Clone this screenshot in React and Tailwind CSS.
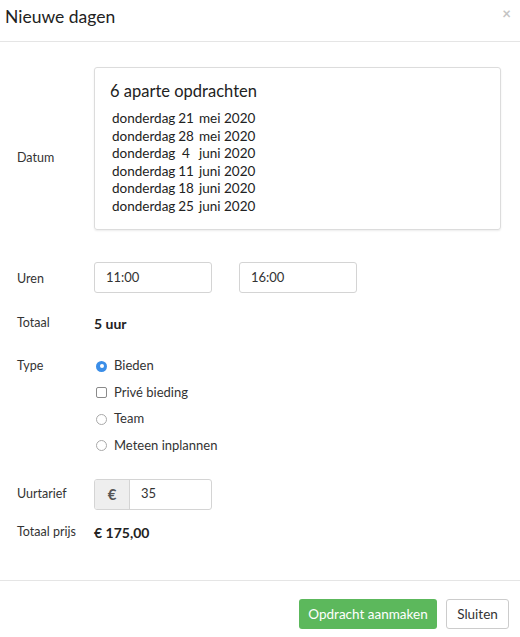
const dates = [
  ["donderdag", "21", "mei", "2020"],
  ["donderdag", "28", "mei", "2020"],
  ["donderdag", "4", "juni", "2020"],
  ["donderdag", "11", "juni", "2020"],
  ["donderdag", "18", "juni", "2020"],
  ["donderdag", "25", "juni", "2020"],
]

function Radio({ checked }) {
  if (checked) {
    return (
      <span className="w-[11px] h-[11px] rounded-full bg-[#3b8ee8] flex items-center justify-center">
        <span className="w-[4px] h-[4px] rounded-full bg-white" />
      </span>
    )
  }
  return <span className="w-[11px] h-[11px] rounded-full border border-[#a9a9a9] bg-white" />
}

function Checkbox() {
  return <span className="w-[11px] h-[11px] rounded-[2px] border border-[#8a8a8a] bg-white" />
}

export default function App() {
  return (
    <div className="w-[520px] h-[637px] bg-white text-[#333] text-[13px] font-['Lato',sans-serif] flex flex-col">
      {/* Header */}
      <div className="h-[42px] border-b border-[#e5e5e5] flex items-start justify-between pl-[5px] pr-[9px] pt-[5px]">
        <h1 className="text-[17.5px] leading-[24px] text-[#222]">Nieuwe dagen</h1>
        <span className="text-[#c4c4c4] text-[15px] font-bold leading-[16px]">×</span>
      </div>

      {/* Body */}
      <div className="flex-1 pl-[17px] pr-[19px] pt-[25px]">
        {/* Datum */}
        <div className="flex">
          <div className="w-[77px] pt-[83px] text-[12.5px] leading-[16px]">Datum</div>
          <div className="flex-1 h-[163px] border border-[#dcdcdc] rounded-[3px] shadow-[0_1px_2px_rgba(0,0,0,0.08)] pl-[15px] pt-[11px]">
            <div className="text-[16.5px] leading-[24px] text-[#222] mb-[7px]">6 aparte opdrachten</div>
            <div className="pl-[2px] text-[13.5px] leading-[17.6px] text-[#222]">
              {dates.map((d, i) => (
                <div key={i} className="flex">
                  <span className="w-[66px] shrink-0">{d[0]}</span>
                  <span className="w-[16px] shrink-0 text-center">{d[1]}</span>
                  <span className="w-[30px] shrink-0 pl-[5px]">{d[2]}</span>
                  <span>{d[3]}</span>
                </div>
              ))}
            </div>
          </div>
        </div>

        {/* Uren */}
        <div className="flex items-center mt-[32px] h-[31px]">
          <div className="w-[77px] text-[12.5px] pt-[3px]">Uren</div>
          <div className="w-[118px] h-[31px] border border-[#d4d4d4] rounded-[3px] flex items-center pl-[11px] text-[13px] text-[#333]">11:00</div>
          <div className="w-[118px] h-[31px] border border-[#d4d4d4] rounded-[3px] flex items-center pl-[11px] text-[13px] text-[#333] ml-[27px]">16:00</div>
        </div>

        {/* Totaal */}
        <div className="flex items-center mt-[20px] h-[20px]">
          <div className="w-[77px] text-[12.5px]">Totaal</div>
          <div className="font-bold text-[14px] text-[#222]">5 uur</div>
        </div>

        {/* Type */}
        <div className="flex mt-[23px]">
          <div className="w-[77px] text-[12.5px] leading-[20px]">Type</div>
          <div className="flex flex-col gap-[6.5px] pl-[2px]">
            <label className="flex items-center gap-[7px] h-[20px] text-[13px]"><Radio checked />Bieden</label>
            <label className="flex items-center gap-[7px] h-[20px] text-[13px]"><Checkbox />Privé bieding</label>
            <label className="flex items-center gap-[7px] h-[20px] text-[13px]"><Radio />Team</label>
            <label className="flex items-center gap-[7px] h-[20px] text-[13px]"><Radio />Meteen inplannen</label>
          </div>
        </div>

        {/* Uurtarief */}
        <div className="flex items-center mt-[23px] h-[31px]">
          <div className="w-[77px] text-[12.5px]">Uurtarief</div>
          <div className="w-[118px] h-[31px] border border-[#d4d4d4] rounded-[3px] flex overflow-hidden">
            <div className="w-[35px] bg-[#eeeeee] border-r border-[#d4d4d4] flex items-center justify-center text-[15px] font-bold text-[#555]">€</div>
            <div className="flex items-center pl-[11px] text-[13px]">35</div>
          </div>
        </div>

        {/* Totaal prijs */}
        <div className="flex items-center mt-[13px] h-[20px]">
          <div className="w-[77px] text-[12.5px]">Totaal prijs</div>
          <div className="font-bold text-[14px] text-[#222]">€ 175,00</div>
        </div>
      </div>

      {/* Footer */}
      <div className="h-[57px] border-t border-[#e5e5e5] flex items-start justify-end gap-[9px] pr-[11px] pt-[18px]">
        <button className="h-[30px] w-[138px] whitespace-nowrap rounded-[3px] bg-[#5cb85c] text-white text-[13.5px]">Opdracht aanmaken</button>
        <button className="h-[30px] w-[63px] whitespace-nowrap rounded-[3px] border border-[#cccccc] bg-white text-[13.5px] text-[#333]">Sluiten</button>
      </div>
    </div>
  )
}
